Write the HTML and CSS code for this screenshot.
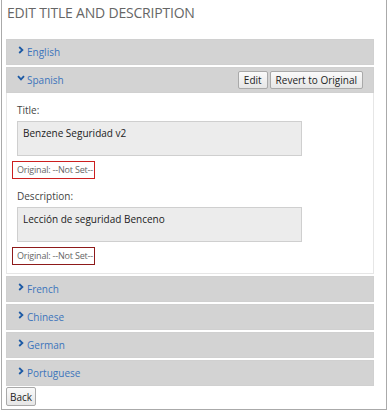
FILE: index.html
```html
<!DOCTYPE html>
<html lang="en">
<head>
  <meta charset="UTF-8">
  <title>Edit Title and Description</title>
  <link rel="stylesheet" href="styles.css">
</head>
<body>
  <div class="frame">
    <h1>EDIT TITLE AND DESCRIPTION</h1>

    <div class="panel">
      <div class="panel-head"><svg class="chev" viewBox="0 0 6 8"><polyline points="1.2,1 4.4,4 1.2,7"/></svg>English</div>
    </div>

    <div class="panel open">
      <div class="panel-head">
        <svg class="chev" viewBox="0 0 8 6"><polyline points="1,1.2 4,4.4 7,1.2"/></svg>Spanish
        <div class="actions">
          <button>Edit</button>
          <button>Revert to Original</button>
        </div>
      </div>
      <div class="panel-body">
        <div class="field-label">Title:</div>
        <div class="textbox">Benzene Seguridad v2</div>
        <div class="original bright">Original: --Not Set--</div>
        <div class="field-label">Description:</div>
        <div class="textbox">Lección de seguridad Benceno</div>
        <div class="original dark">Original: --Not Set--</div>
      </div>
    </div>

    <div class="panel">
      <div class="panel-head"><svg class="chev" viewBox="0 0 6 8"><polyline points="1.2,1 4.4,4 1.2,7"/></svg>French</div>
    </div>
    <div class="panel">
      <div class="panel-head"><svg class="chev" viewBox="0 0 6 8"><polyline points="1.2,1 4.4,4 1.2,7"/></svg>Chinese</div>
    </div>
    <div class="panel">
      <div class="panel-head"><svg class="chev" viewBox="0 0 6 8"><polyline points="1.2,1 4.4,4 1.2,7"/></svg>German</div>
    </div>
    <div class="panel">
      <div class="panel-head"><svg class="chev" viewBox="0 0 6 8"><polyline points="1.2,1 4.4,4 1.2,7"/></svg>Portuguese</div>
    </div>

    <button class="back">Back</button>
  </div>
</body>
</html>
```

FILE: styles.css
```css
body {
  margin: 0;
  font-family: 'Open Sans', sans-serif;
  background: #fff;
}
.frame {
  width: 386px;
  height: 410px;
  margin-left: 1px;
  border: 1px solid #aaa;
  border-top: none;
  padding: 0 12px 0 4px;
  box-sizing: border-box;
}
h1 {
  margin: 0;
  padding: 3px 0 0 1px;
  height: 39px;
  box-sizing: border-box;
  font-size: 14px;
  font-weight: 400;
  color: #666;
  letter-spacing: -0.2px;
}
.panel {
  margin-bottom: 2px;
}
.panel-head {
  background: #d3d3d3;
  height: 26px;
  display: flex;
  align-items: center;
  padding-left: 10px;
  font-size: 10px;
  color: #3c74bb;
  border: 1px solid #d0d0d0;
  box-sizing: border-box;
}
.chev {
  width: 8px;
  height: 8px;
  margin: -5px 2px 0 0;
  fill: none;
  stroke: #1d5aa5;
  stroke-width: 1.8;
}
.actions {
  margin-left: auto;
  margin-right: 10px;
  display: flex;
  gap: 2px;
}
button {
  font-family: 'Open Sans', sans-serif;
  font-size: 10px;
  color: #222;
  background: linear-gradient(#fafafa, #e6e6e6);
  border: 1px solid #a9a9a9;
  border-radius: 2px;
  height: 18px;
  padding: 0 5px;
}
.panel-body {
  border: 1px solid #e6e6e6;
  border-top: none;
  height: 181px;
  box-sizing: border-box;
  padding: 10px 0 0 5px;
}
.field-label {
  font-size: 10px;
  color: #444;
  padding-left: 5px;
  height: 18px;
}
.textbox {
  margin-left: 5px;
  width: 285px;
  height: 35px;
  box-sizing: border-box;
  background: #ececec;
  border: 1px solid #cfcfcf;
  padding: 4px 5px;
  font-size: 10px;
  color: #222;
}
.original {
  display: inline-block;
  margin: 5px 0 10px 0;
  height: 18px;
  width: 83px;
  box-sizing: border-box;
  padding: 1px 0 0 4px;
  font-size: 9px;
  letter-spacing: -0.2px;
  color: #666;
  white-space: nowrap;
}
.original.bright {
  border: 1px solid #cc1f1f;
}
.original.dark {
  border: 1px solid #8e1a1a;
}
.back {
  display: block;
  margin-top: -1px;
  height: 19px;
  width: 30px;
  padding: 0;
  font-size: 10px;
}
```
